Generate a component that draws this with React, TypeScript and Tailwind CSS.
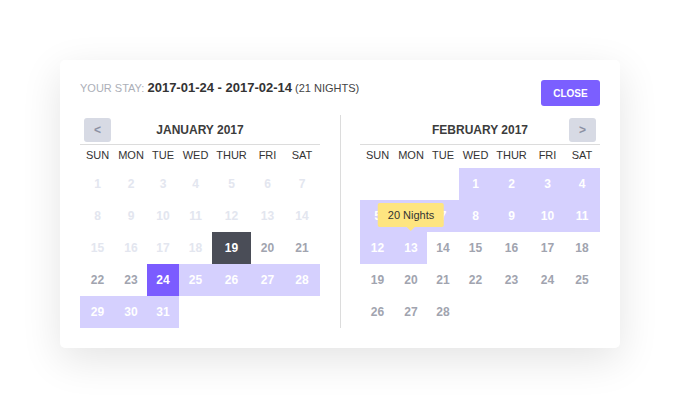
import React from "react";

type DayState = "blank" | "disabled" | "normal" | "today" | "start" | "range";

type Day = { n?: number; s: DayState; tip?: string };

const DAY_NAMES = ["SUN", "MON", "TUE", "WED", "THUR", "FRI", "SAT"];

function buildJanuary(): Day[] {
  const days: Day[] = [];
  for (let i = 1; i <= 31; i++) {
    let s: DayState = "normal";
    if (i < 19) s = "disabled";
    else if (i === 19) s = "today";
    else if (i === 24) s = "start";
    else if (i > 24) s = "range";
    days.push({ n: i, s });
  }
  return days;
}

function buildFebruary(): Day[] {
  const days: Day[] = [{ s: "blank" }, { s: "blank" }, { s: "blank" }];
  for (let i = 1; i <= 28; i++) {
    const s: DayState = i <= 13 ? "range" : "normal";
    days.push({ n: i, s, tip: i === 13 ? "20 Nights" : undefined });
  }
  return days;
}

function cellClass(s: DayState) {
  switch (s) {
    case "disabled":
      return "text-[#e3e6ef]";
    case "normal":
      return "text-[#a1a4af]";
    case "today":
      return "bg-[#4a4d57] text-white";
    case "start":
      return "bg-[#7b5cff] text-white";
    case "range":
      return "bg-[#d5d0fe] text-white";
    default:
      return "";
  }
}

function Calendar({ title, days, side }: { title: string; days: Day[]; side: "left" | "right" }) {
  return (
    <div className="w-[240px] shrink-0">
      <div className="grid h-[30px] grid-cols-[31px_1fr_31px] items-center border-b border-[#dcdcdc]">
        <div className="flex justify-start pl-[4px]">
          {side === "left" && (
            <button className="flex h-[24px] w-[27px] items-center justify-center rounded-[3px] bg-[#d7dae4] text-[12px] font-bold text-[#8c91a3]">
              &lt;
            </button>
          )}
        </div>
        <div className="text-center text-[12px] font-bold leading-[14px] text-[#3c3c3c]">{title}</div>
        <div className="flex justify-end pr-[4px]">
          {side === "right" && (
            <button className="flex h-[24px] w-[27px] items-center justify-center rounded-[3px] bg-[#d7dae4] text-[12px] font-bold text-[#8c91a3]">
              &gt;
            </button>
          )}
        </div>
      </div>
      <div className="grid grid-cols-[35px_32px_32px_33px_39px_33px_36px]">
        {DAY_NAMES.map((d) => (
          <div key={d} className="h-[23px] pt-[3px] text-center text-[11px] leading-[14px] text-[#333]">
            {d}
          </div>
        ))}
        {days.map((d, i) => (
          <div
            key={i}
            className={`relative flex h-[32px] items-center justify-center text-[12px] font-bold ${cellClass(d.s)}`}
          >
            {d.n}
            {d.tip && (
              <div className="absolute bottom-[calc(100%+5px)] left-1/2 z-10 -translate-x-1/2 whitespace-nowrap rounded-[2px] bg-[#fee580] px-[10px] py-[5px] text-[11px] font-normal leading-[14px] text-[#333]">
                {d.tip}
                <span className="absolute left-1/2 top-full h-0 w-0 -translate-x-1/2 border-x-[4px] border-t-[4px] border-x-transparent border-t-[#fee580]" />
              </div>
            )}
          </div>
        ))}
      </div>
    </div>
  );
}

export default function App() {
  return (
    <div className="min-h-[409px] bg-white pt-[60px] font-['Liberation_Sans',Arial,sans-serif]">
      <div className="mx-auto w-[560px] rounded-[5px] bg-white px-[20px] pb-[20px] pt-[20px] shadow-[0_12px_40px_rgba(0,0,0,0.11)]">
        <div className="flex items-start justify-between">
          <div className="leading-[14px] text-[#444]">
            <span className="text-[11px] text-[#acafb8]">YOUR STAY: </span>
            <span className="text-[13px] font-bold text-[#333]">2017-01-24 - 2017-02-14</span>
            <span className="text-[11px] text-[#444]"> (21 NIGHTS)</span>
          </div>
          <button className="h-[26px] w-[59px] rounded-[3px] bg-[#7b5fff] text-[10px] font-bold text-white">
            CLOSE
          </button>
        </div>
        <div className="mt-[9px] flex">
          <Calendar title="JANUARY 2017" days={buildJanuary()} side="left" />
          <div className="ml-[20px] mr-[19px] w-px bg-[#dcdcdc]" />
          <Calendar title="FEBRUARY 2017" days={buildFebruary()} side="right" />
        </div>
      </div>
    </div>
  );
}
